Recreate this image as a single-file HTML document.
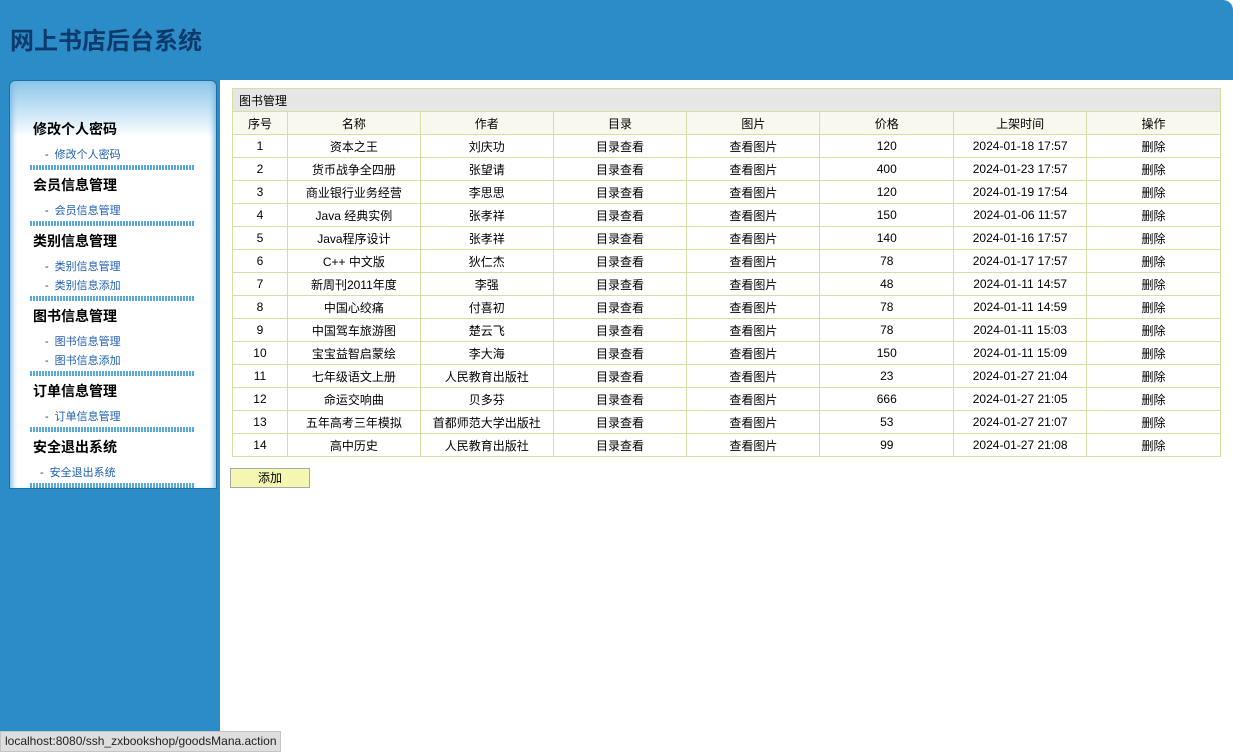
<!DOCTYPE html>
<html><head><meta charset="utf-8"><style>
*{margin:0;padding:0;box-sizing:border-box}
body{width:1233px;height:752px;background:#fff;font-family:"Liberation Sans","Noto Sans CJK SC",sans-serif;position:relative;overflow:hidden}
.top{position:absolute;left:0;top:0;width:1233px;height:80px;background:#2b8cc8;border-top-right-radius:10px}
.left{position:absolute;left:0;top:80px;width:220px;height:672px;background:#2b8cc8}
.title{position:absolute;left:10px;top:21px;font-size:24px;font-weight:bold;color:#0d3a6c}
.side{position:absolute;left:9px;top:80px;width:208px;height:409px;border:1px solid #1d6fa6;border-radius:6px 6px 0 0;background:linear-gradient(#8cc6ea 0,#e6f3fb 45px,#fff 55px);box-shadow:inset 6px 0 6px -4px #7ab8e0,inset -6px 0 6px -4px #7ab8e0}
.h{position:absolute;left:33px;font-size:14px;font-weight:bold;color:#000}
.l{position:absolute;left:45px;font-size:11px;color:#1f5fb0}
.l b{font-weight:normal;color:#333;margin-right:6px}
.d{position:absolute;left:30px;width:165px;height:5px;background:repeating-linear-gradient(90deg,#5aa9dd 0 2px,#fff 2px 3px)}
table{position:absolute;left:232px;top:88px;width:989px;border-collapse:collapse;font-size:12px;color:#000}
td{border:1px solid #d6dea6;height:23px;text-align:center;padding:0}
tr.cap td{background:#e6e6e6;text-align:left;padding-left:6px;height:23px}
tr.hd td{background:#f8f8ef}
.btn{position:absolute;left:230px;top:468px;width:80px;height:20px;background:#f3f7b2;border:1px solid #a8a8a8;font-size:12px;text-align:center;line-height:18px}
.st{position:absolute;left:0;top:731px;width:281px;height:21px;background:#dedede;border:1px solid #c4c4c4;font-size:12px;line-height:19px;padding-left:4px;color:#222}
</style></head><body>
<div class="top"><div class="title">网上书店后台系统</div></div>
<div class="left"></div>
<div class="side"></div>
<div class="h" style="top:119px">修改个人密码</div>
<div class="l" style="top:146px"><b>-</b>修改个人密码</div>
<div class="d" style="top:165px"></div>
<div class="h" style="top:175px">会员信息管理</div>
<div class="l" style="top:202px"><b>-</b>会员信息管理</div>
<div class="d" style="top:221px"></div>
<div class="h" style="top:231px">类别信息管理</div>
<div class="l" style="top:258px"><b>-</b>类别信息管理</div>
<div class="l" style="top:277px"><b>-</b>类别信息添加</div>
<div class="d" style="top:296px"></div>
<div class="h" style="top:306px">图书信息管理</div>
<div class="l" style="top:333px"><b>-</b>图书信息管理</div>
<div class="l" style="top:352px"><b>-</b>图书信息添加</div>
<div class="d" style="top:371px"></div>
<div class="h" style="top:381px">订单信息管理</div>
<div class="l" style="top:408px"><b>-</b>订单信息管理</div>
<div class="d" style="top:427px"></div>
<div class="h" style="top:437px">安全退出系统</div>
<div class="l" style="top:464px;left:40px"><b>-</b>安全退出系统</div>
<div class="d" style="top:483px"></div>
<table>
<colgroup><col style="width:55px"><col style="width:133px"><col style="width:133px"><col style="width:134px"><col style="width:133px"><col style="width:134px"><col style="width:133px"><col style="width:134px"></colgroup>
<tr class="cap"><td colspan="8">图书管理</td></tr>
<tr class="hd"><td>序号</td><td>名称</td><td>作者</td><td>目录</td><td>图片</td><td>价格</td><td>上架时间</td><td>操作</td></tr>
<tr><td>1</td><td>资本之王</td><td>刘庆功</td><td>目录查看</td><td>查看图片</td><td>120</td><td>2024-01-18 17:57</td><td>删除</td></tr>
<tr><td>2</td><td>货币战争全四册</td><td>张望请</td><td>目录查看</td><td>查看图片</td><td>400</td><td>2024-01-23 17:57</td><td>删除</td></tr>
<tr><td>3</td><td>商业银行业务经营</td><td>李思思</td><td>目录查看</td><td>查看图片</td><td>120</td><td>2024-01-19 17:54</td><td>删除</td></tr>
<tr><td>4</td><td>Java 经典实例</td><td>张孝祥</td><td>目录查看</td><td>查看图片</td><td>150</td><td>2024-01-06 11:57</td><td>删除</td></tr>
<tr><td>5</td><td>Java程序设计</td><td>张孝祥</td><td>目录查看</td><td>查看图片</td><td>140</td><td>2024-01-16 17:57</td><td>删除</td></tr>
<tr><td>6</td><td>C++ 中文版</td><td>狄仁杰</td><td>目录查看</td><td>查看图片</td><td>78</td><td>2024-01-17 17:57</td><td>删除</td></tr>
<tr><td>7</td><td>新周刊2011年度</td><td>李强</td><td>目录查看</td><td>查看图片</td><td>48</td><td>2024-01-11 14:57</td><td>删除</td></tr>
<tr><td>8</td><td>中国心绞痛</td><td>付喜初</td><td>目录查看</td><td>查看图片</td><td>78</td><td>2024-01-11 14:59</td><td>删除</td></tr>
<tr><td>9</td><td>中国驾车旅游图</td><td>楚云飞</td><td>目录查看</td><td>查看图片</td><td>78</td><td>2024-01-11 15:03</td><td>删除</td></tr>
<tr><td>10</td><td>宝宝益智启蒙绘</td><td>李大海</td><td>目录查看</td><td>查看图片</td><td>150</td><td>2024-01-11 15:09</td><td>删除</td></tr>
<tr><td>11</td><td>七年级语文上册</td><td>人民教育出版社</td><td>目录查看</td><td>查看图片</td><td>23</td><td>2024-01-27 21:04</td><td>删除</td></tr>
<tr><td>12</td><td>命运交响曲</td><td>贝多芬</td><td>目录查看</td><td>查看图片</td><td>666</td><td>2024-01-27 21:05</td><td>删除</td></tr>
<tr><td>13</td><td>五年高考三年模拟</td><td>首都师范大学出版社</td><td>目录查看</td><td>查看图片</td><td>53</td><td>2024-01-27 21:07</td><td>删除</td></tr>
<tr><td>14</td><td>高中历史</td><td>人民教育出版社</td><td>目录查看</td><td>查看图片</td><td>99</td><td>2024-01-27 21:08</td><td>删除</td></tr>
</table>
<div class="btn">添加</div>
<div class="st">localhost:8080/ssh_zxbookshop/goodsMana.action</div>
</body></html>
